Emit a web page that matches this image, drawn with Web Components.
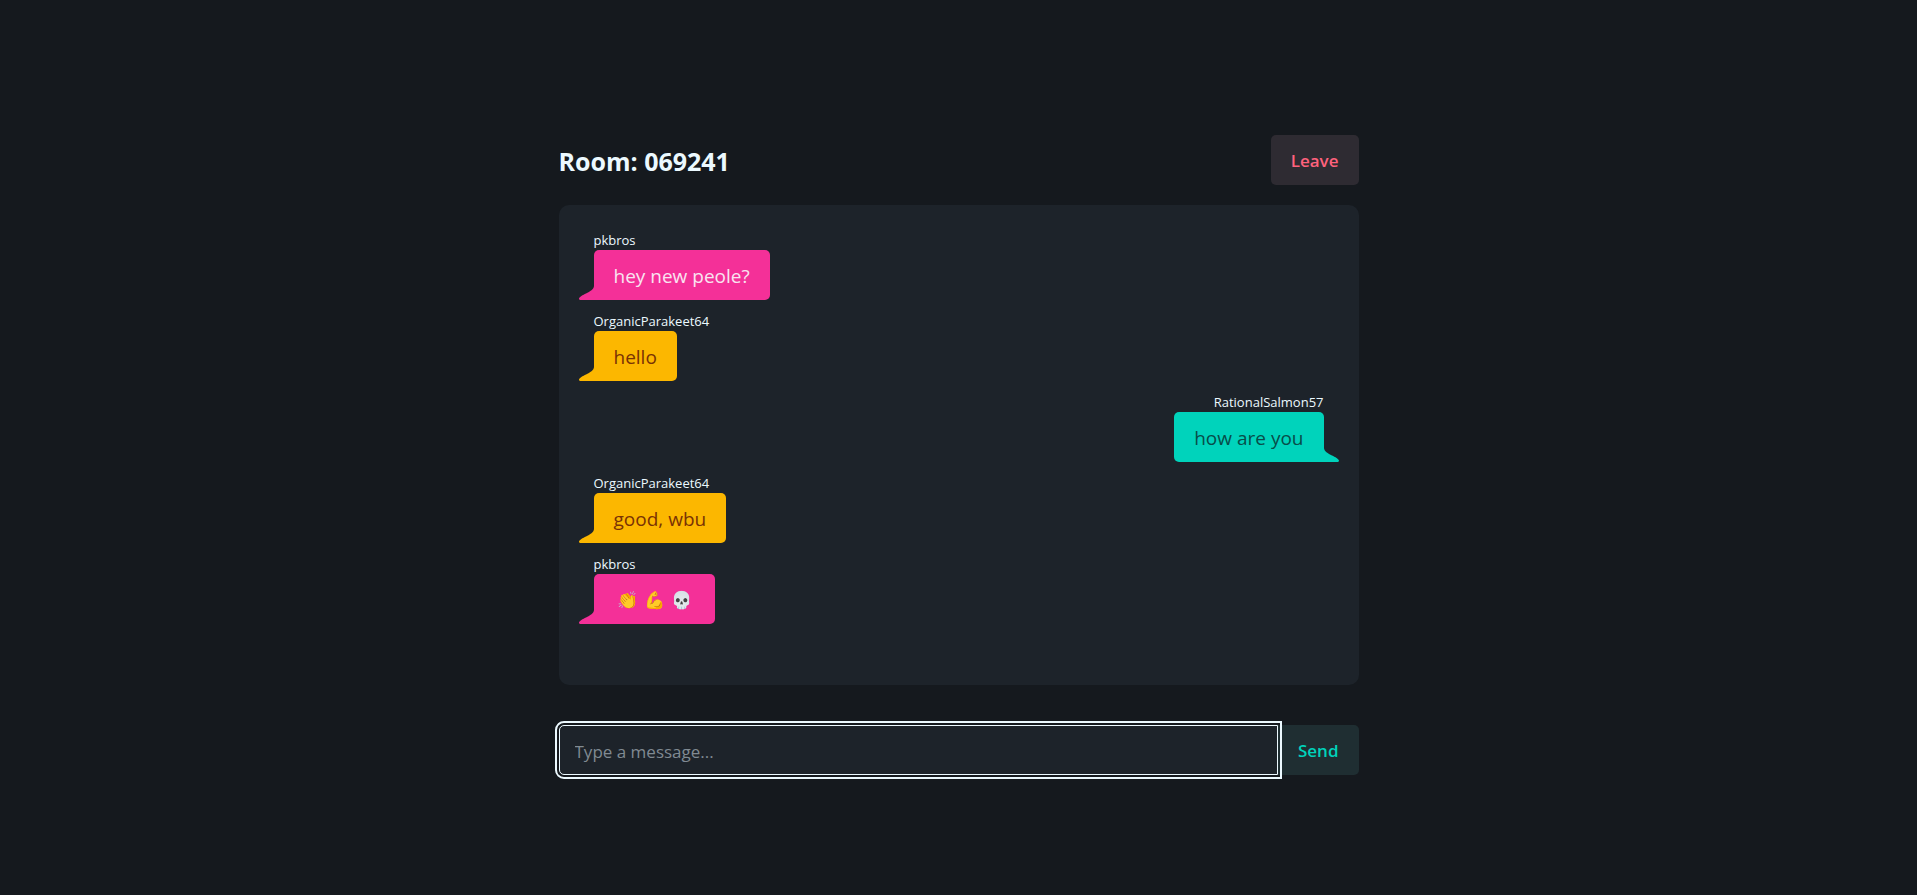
<!DOCTYPE html>
<html lang="en">
<head>
<meta charset="utf-8">
<meta name="viewport" content="width=device-width, initial-scale=1">
<title>Chat room</title>
<style>
  :root {
    --page: #15191e;
    --panel: #1d232a;
    --content: #ecf9ff;
    --accent: #00d3bb;
    --error: #ff627d;
  }
  body {
    margin: 0;
    min-height: 100vh;
    background: var(--page);
    color: var(--content);
    font-family: "Segoe UI", "Open Sans", "Noto Sans", sans-serif;
    font-size: 17px;
  }
</style>
</head>
<body>
<chat-room code="069241">
  <chat-message author="pkbros" color="pink">hey new peole?</chat-message>
  <chat-message author="OrganicParakeet64" color="amber">hello</chat-message>
  <chat-message author="RationalSalmon57" color="teal" own>how are you</chat-message>
  <chat-message author="OrganicParakeet64" color="amber">good, wbu</chat-message>
  <chat-message author="pkbros" color="pink"><span>👏</span><span>💪</span><span>💀</span></chat-message>
</chat-room>

<script>
class ChatRoom extends HTMLElement {
  constructor() {
    super();
    const shadowRoot = this.attachShadow({ mode: 'open' });
    shadowRoot.innerHTML = `
      <style>
        :host {
          display: block;
          box-sizing: border-box;
          max-width: 800px;
          margin: 0 auto;
          padding-top: 135px;
        }
        header {
          display: flex;
          align-items: center;
          justify-content: space-between;
          margin-bottom: 20px;
        }
        h1 {
          margin: 0;
          padding-top: 2px;
          font-size: 25px;
          line-height: 32px;
          font-weight: 700;
        }
        .messages {
          box-sizing: border-box;
          min-height: 480px;
          padding: 20px;
          margin-bottom: 40px;
          border-radius: 10px;
          background: var(--panel);
        }
      </style>
      <header>
        <h1></h1>
        <soft-button tone="error">Leave</soft-button>
      </header>
      <section class="messages"><slot></slot></section>
      <message-form></message-form>
    `;
  }
  connectedCallback() {
    this.shadowRoot.querySelector('h1').textContent = `Room: ${this.getAttribute('code')}`;
  }
}

class ChatMessage extends HTMLElement {
  constructor() {
    super();
    const shadowRoot = this.attachShadow({ mode: 'open' });
    shadowRoot.innerHTML = `
      <style>
        :host {
          display: flex;
          flex-direction: column;
          align-items: flex-start;
          padding: 6px 15px;
        }
        :host([own]) { align-items: flex-end; }
        :host([color=pink]) { --bubble: #f43098; --ink: #f9e4f0; }
        :host([color=amber]) { --bubble: #fcb700; --ink: #793205; }
        :host([color=teal]) { --bubble: #00d3bb; --ink: #084d49; }
        .author {
          font-size: 13px;
          line-height: 19px;
        }
        .bubble {
          position: relative;
          box-sizing: border-box;
          min-height: 50px;
          padding: 11px 20px 9px;
          border-radius: 5px;
          border-bottom-left-radius: 0;
          background: var(--bubble);
          color: var(--ink);
          font-size: 19px;
          line-height: 30px;
        }
        :host([own]) .bubble { border-radius: 5px 5px 0 5px; }
        /* emoji get a wider cell than the letters around them */
        ::slotted(span) {
          display: inline-block;
          width: 27px;
          font-size: 17px;
          line-height: 30px;
          text-align: center;
          vertical-align: top;
        }
        .tail {
          position: absolute;
          bottom: 0;
          right: 100%;
          width: 15px;
          height: 15px;
          fill: var(--bubble);
        }
        :host([own]) .tail {
          right: auto;
          left: 100%;
          transform: scaleX(-1);
        }
      </style>
      <div class="author"></div>
      <div class="bubble">
        <svg class="tail" viewBox="0 0 15 15" aria-hidden="true"><path d="M15 1C15 4 11 6.500 7 8.500C4 10 0 12 0 13.800C0 14.700 .8 15 2 15H15Z"/></svg>
        <slot></slot>
      </div>
    `;
  }
  connectedCallback() {
    this.shadowRoot.querySelector('.author').textContent = this.getAttribute('author');
  }
}

class SoftButton extends HTMLElement {
  constructor() {
    super();
    const shadowRoot = this.attachShadow({ mode: 'open', delegatesFocus: true });
    shadowRoot.innerHTML = `
      <style>
        :host { display: block; }
        button {
          height: 50px;
          padding: 0 20px;
          border: 0;
          border-radius: 5px;
          background: #1f2e32;
          color: var(--accent);
          font: inherit;
          font-weight: 600;
          cursor: pointer;
        }
        :host([tone=error]) button {
          background: #2e2b32;
          color: var(--error);
        }
        :host([joined]) button {
          border-radius: 0 5px 5px 0;
        }
      </style>
      <button type="button"><slot></slot></button>
    `;
  }
}

class MessageForm extends HTMLElement {
  constructor() {
    super();
    const shadowRoot = this.attachShadow({ mode: 'open' });
    shadowRoot.innerHTML = `
      <style>
        :host { display: block; }
        form { display: flex; }
        input {
          position: relative;
          z-index: 1;
          flex: 1;
          min-width: 0;
          box-sizing: border-box;
          height: 50px;
          padding: 2px 15px 0;
          border: 1px solid var(--content);
          border-radius: 5px 0 0 5px;
          outline: 2px solid var(--content);
          outline-offset: 2px;
          background: var(--panel);
          color: var(--content);
          font: inherit;
        }
        input::placeholder { color: #808a92; }
      </style>
      <form>
        <input type="text" placeholder="Type a message..." aria-label="Message">
        <soft-button joined>Send</soft-button>
      </form>
    `;
  }
}

customElements.define('soft-button', SoftButton);
customElements.define('message-form', MessageForm);
customElements.define('chat-message', ChatMessage);
customElements.define('chat-room', ChatRoom);
</script>
</body>
</html>
